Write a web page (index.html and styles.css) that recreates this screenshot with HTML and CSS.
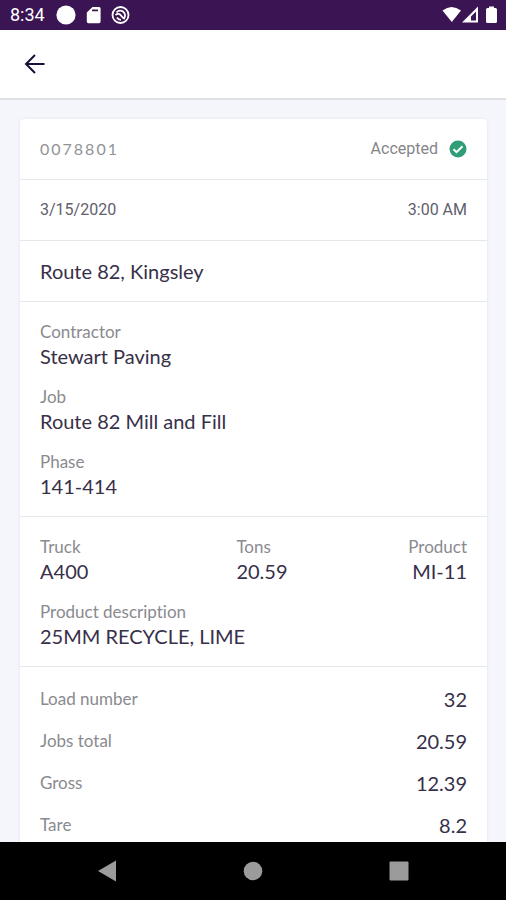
FILE: index.html
```html
<!DOCTYPE html>
<html lang="en">
<head>
<meta charset="utf-8">
<meta name="viewport" content="width=device-width, initial-scale=1">
<title>Ticket 0078801</title>
<link rel="stylesheet" href="styles.css">
</head>
<body>
<div class="status-bar">
  <span class="clock">8:34</span>
  <svg class="notices" width="76" height="22" viewBox="0 0 76 22" aria-hidden="true">
    <circle cx="11" cy="11" r="9.600" fill="#fff"/>
    <path fill="#fff" fill-rule="evenodd" d="M37.500 3H44q1.600 0 1.600 1.600v13q0 1.600-1.600 1.600H33.400q-1.600 0-1.600-1.600V8.500zM37 5.500v1.800h6V5.500z"/>
    <circle cx="65.500" cy="11" r="8" fill="none" stroke="#fff" stroke-width="1.800"/>
    <path d="M61.500 8.500a4.700 4.700 0 1 1 7.500 6M60.500 11c2.500-2 4.500-1 5.500 .5s2 3 4 3M62 13.500a4.700 4.700 0 0 0 4 2.300" fill="none" stroke="#fff" stroke-width="1.800"/>
  </svg>
  <svg class="signals" width="56" height="20" viewBox="0 0 56 20" aria-hidden="true">
    <path d="M0.500 5.500Q9.500-1.500 19 5.500L9.800 17z" fill="#fff"/>
    <path fill="#fff" fill-rule="evenodd" d="M20 17.500L36 1.500v16zM29 15.500h5v-9L29 11.500z"/>
    <path d="M47 1.500h5V3h1.500q1.500 0 1.500 1.500v12q0 1.500-1.500 1.500h-8q-1.500 0-1.500-1.500v-12Q44 3 45.500 3H47z" fill="#fff"/>
  </svg>
</div>
<header class="app-bar">
  <button class="back" type="button" aria-label="Back">
    <svg width="22" height="22" viewBox="0 0 22 22" aria-hidden="true"><path d="M20.500 11H2.500M11 2L2 11l9 9" fill="none" stroke="#17103a" stroke-width="2"/></svg>
  </button>
</header>
<main class="content">
  <article class="card">
    <section class="row">
      <span class="ticket">0078801</span>
      <span class="state">Accepted
        <svg width="18" height="18" viewBox="0 0 18 18" aria-hidden="true"><circle cx="9" cy="9" r="8.500" fill="#2f9e77"/><path d="M4.500 9.200l3 3 6-6" fill="none" stroke="#fff" stroke-width="2"/></svg>
      </span>
    </section>
    <section class="row when"><span>3/15/2020</span><span>3:00 AM</span></section>
    <section class="row place">Route 82, Kingsley</section>
    <dl class="details">
      <div><dt>Contractor</dt><dd>Stewart Paving</dd></div>
      <div><dt>Job</dt><dd>Route 82 Mill and Fill</dd></div>
      <div><dt>Phase</dt><dd>141-414</dd></div>
    </dl>
    <dl class="details">
      <div class="columns">
        <div><dt>Truck</dt><dd>A400</dd></div>
        <div><dt>Tons</dt><dd>20.59</dd></div>
        <div class="end"><dt>Product</dt><dd>MI-11</dd></div>
      </div>
      <div><dt>Product description</dt><dd>25MM RECYCLE, LIME</dd></div>
    </dl>
    <dl class="totals">
      <div><dt>Load number</dt><dd>32</dd></div>
      <div><dt>Jobs total</dt><dd>20.59</dd></div>
      <div><dt>Gross</dt><dd>12.39</dd></div>
      <div><dt>Tare</dt><dd>8.2</dd></div>
    </dl>
  </article>
</main>
<nav class="system-nav" aria-label="System">
  <button type="button" aria-label="Back"><svg width="22" height="22" viewBox="0 0 22 22"><path d="M2 11L20 .5v21z" fill="#9b9b9b"/></svg></button>
  <button type="button" aria-label="Home"><svg width="22" height="22" viewBox="0 0 22 22"><circle cx="11" cy="11" r="9.300" fill="#9b9b9b"/></svg></button>
  <button type="button" aria-label="Recent apps"><svg width="22" height="22" viewBox="0 0 22 22"><rect x="1.500" y="1.500" width="19" height="19" rx="1" fill="#9b9b9b"/></svg></button>
</nav>
</body>
</html>
```

FILE: styles.css
```css
* { box-sizing: border-box; }

body {
  margin: 0;
  height: 100vh;
  display: flex;
  flex-direction: column;
  background: #f4f6fb;
  color: #373049;
  font-family: Lato, "Liberation Sans", sans-serif;
  font-size: 20px;
  font-variant-ligatures: none;
}

svg { display: block; }

button {
  padding: 0;
  border: 0;
  background: none;
}

.status-bar {
  flex: none;
  height: 30px;
  padding: 0 8px 0 10px;
  display: flex;
  align-items: center;
  background: #3b1453;
  color: #fff;
  font: 18px/30px Roboto, sans-serif;
}

.notices { margin-left: 10px; }
.signals { margin-left: auto; }

.app-bar {
  flex: none;
  height: 70px;
  padding: 0 24px;
  display: flex;
  align-items: center;
  background: #fff;
  border-bottom: 2px solid #dfe1e4;
}

.content {
  flex: 1;
  min-height: 0;
  overflow-y: auto;
  scrollbar-width: none;
  padding: 19px 19px 0 20px;
}

.card {
  background: #fff;
  border-radius: 4px;
  box-shadow: 0 0 3px #dfe1ea;
}

.row, .details { border-bottom: 1px solid #e6e7ea; }

.row {
  height: 61px;
  padding: 0 20px;
  display: flex;
  align-items: center;
  justify-content: space-between;
}

.ticket {
  color: #929297;
  font-size: 16px;
  line-height: 20px;
  letter-spacing: 2px;
}

.state {
  display: flex;
  align-items: center;
  gap: 11px;
  color: #85858a;
  font: 16px/20px Roboto, sans-serif;
}

.when {
  color: #62606c;
  font: 16px/20px Roboto, sans-serif;
}

dl, dd { margin: 0; }

dt {
  color: #8a8a8f;
  font-size: 17px;
  line-height: 24px;
}

dd { line-height: 25px; }

.details {
  padding: 18px 20px 17px;
  display: grid;
  gap: 16px;
}

.columns {
  display: grid;
  grid-template-columns: 46% 1fr auto;
}

.columns > .end { text-align: right; }

.totals { padding: 11px 20px; }

.totals > div {
  height: 42px;
  display: flex;
  align-items: center;
  justify-content: space-between;
}

.system-nav {
  flex: none;
  height: 58px;
  padding: 0 34px;
  display: flex;
  align-items: center;
  background: #000;
}

.system-nav button {
  flex: 1;
  display: flex;
  justify-content: center;
}
```
